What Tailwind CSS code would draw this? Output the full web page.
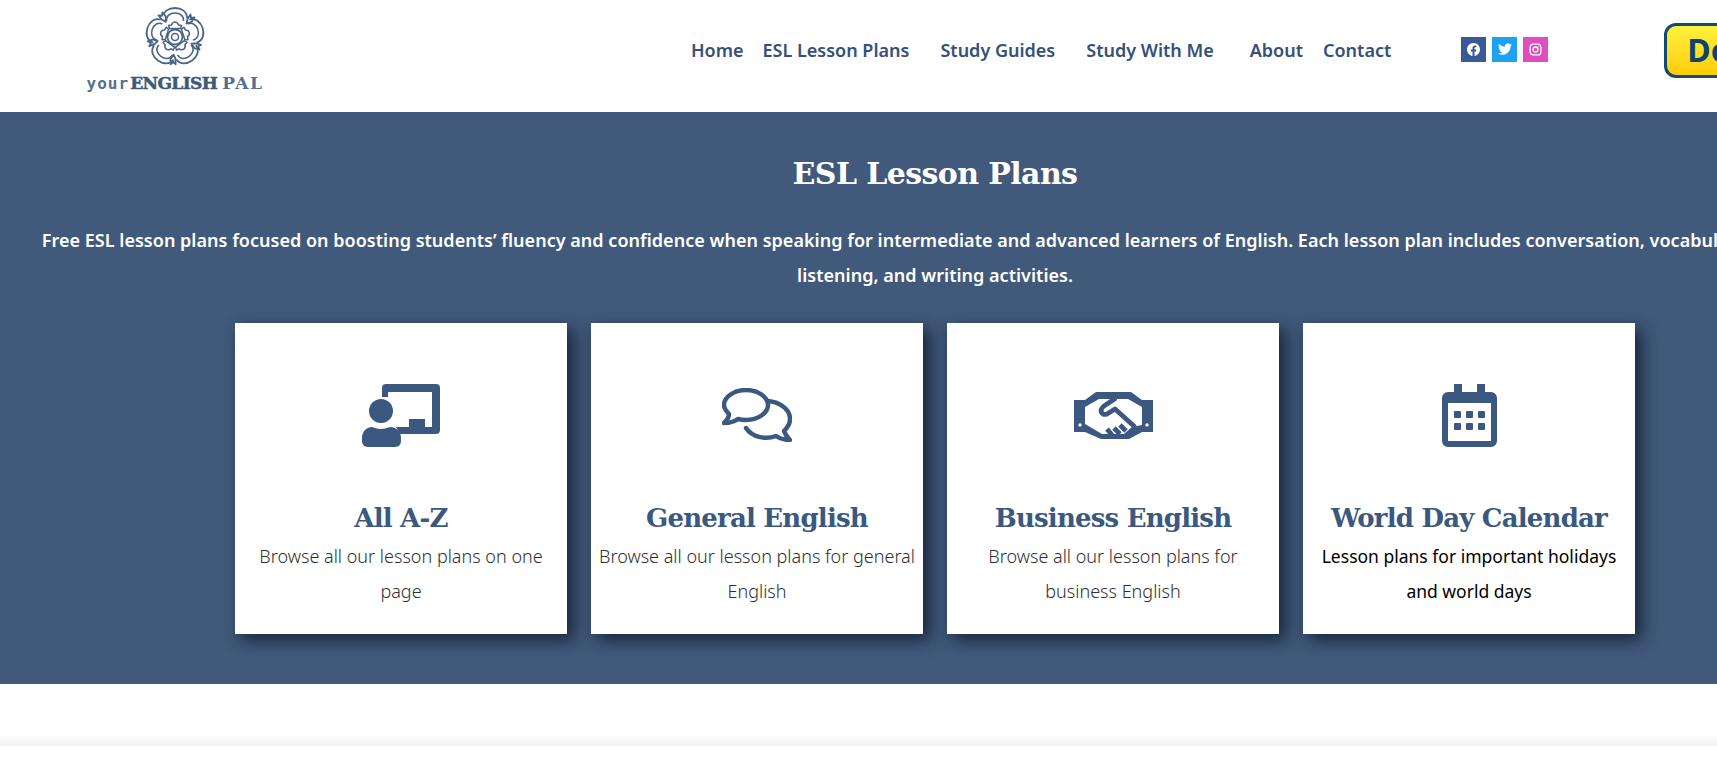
<!DOCTYPE html>
<html lang="en">
<head>
<meta charset="UTF-8" />
<title>ESL Lesson Plans</title>
<script src="https://cdn.jsdelivr.net/npm/@tailwindcss/browser@4"></script>
</head>
<body class="bg-white overflow-hidden h-[758px] font-['Noto_Sans',sans-serif]">
<div class="w-[1870px]">

  <!-- header -->
  <header class="h-[112px] flex items-center bg-white">
    <a class="w-[180px] ml-[85px] self-start flex flex-col items-center pt-[6px] text-[#3d5878]">
      <svg class="w-[62px] h-[62px]" viewBox="0 0 62 62" fill="none" stroke="#4a6585" stroke-width="1.8" stroke-linejoin="round">
        <defs>
          <g id="petal">
            <path d="M19 12C19 5 25 2 31 2s12 3 12 10"/>
            <path d="M22.500 15C22 10 26 7 31 7s9 3 8.500 8" stroke-width="1.500"/>
            <path d="M43.500 13l3-4.500 .5 3.500 3.500-.5-3 4.500-5 1.500z" fill="#fff"/>
            <path d="M31 16c2 0 3 1.500 3.500 3l3 .5-1 3h-11l-1-3 3-.5c.5-1.500 1.500-3 3.500-3z" stroke-width="1.500"/>
          </g>
        </defs>
        <use href="#petal"/>
        <use href="#petal" transform="rotate(72 31 31)"/>
        <use href="#petal" transform="rotate(144 31 31)"/>
        <use href="#petal" transform="rotate(216 31 31)"/>
        <use href="#petal" transform="rotate(288 31 31)"/>
        <circle cx="31" cy="31" r="7.500" fill="#fff"/>
        <circle cx="31" cy="31" r="3.500" stroke-width="1.500"/>
      </svg>
      <div class="flex items-baseline whitespace-nowrap mt-[7px] leading-none">
        <span class="font-['DejaVu_Sans_Mono',monospace] font-bold text-[16px] tracking-[1px] mr-[1px] text-[#55708f]">your</span>
        <span class="font-['DejaVu_Serif',serif] font-bold text-[17px] tracking-[-0.6px] [-webkit-text-stroke:0.5px_#3d5878]">ENGLISH</span>
        <span class="font-['DejaVu_Serif',serif] font-bold text-[17px] ml-[5px] tracking-[1.500px] text-[#55708f]">PAL</span>
      </div>
    </a>

    <nav class="flex items-center ml-[426px] -mt-[11px] text-[18px] font-semibold text-[#35507a] whitespace-nowrap">
      <a>Home</a>
      <a class="ml-[19px]">ESL Lesson Plans</a>
      <a class="ml-[31px]">Study Guides</a>
      <a class="ml-[31px]">Study With Me</a>
      <a class="ml-[36px]">About</a>
      <a class="ml-[20px]">Contact</a>
    </nav>

    <div class="flex items-center gap-[6px] ml-[70px] -mt-[14px]">
      <span class="w-[25px] h-[25px] bg-[#3b5998] flex items-center justify-center">
        <svg class="w-[13px] h-[13px]" viewBox="0 0 24 24" fill="#fff"><path d="M24 12.073c0-6.627-5.373-12-12-12s-12 5.373-12 12c0 5.99 4.388 10.954 10.125 11.854v-8.385H7.078v-3.47h3.047V9.43c0-3.007 1.792-4.669 4.533-4.669 1.312 0 2.686.235 2.686.235v2.953H15.83c-1.491 0-1.956.925-1.956 1.874v2.25h3.328l-.532 3.47h-2.796v8.385C19.612 23.027 24 18.062 24 12.073z"/></svg>
      </span>
      <span class="w-[25px] h-[25px] bg-[#1da1f2] flex items-center justify-center">
        <svg class="w-[14px] h-[14px]" viewBox="0 0 24 24" fill="#fff"><path d="M23.953 4.57a10 10 0 01-2.825.775 4.958 4.958 0 002.163-2.723c-.951.555-2.005.959-3.127 1.184a4.92 4.92 0 00-8.384 4.482C7.69 8.095 4.067 6.13 1.64 3.162a4.822 4.822 0 00-.666 2.475c0 1.71.87 3.213 2.188 4.096a4.904 4.904 0 01-2.228-.616v.06a4.923 4.923 0 003.946 4.827 4.996 4.996 0 01-2.212.085 4.936 4.936 0 004.604 3.417 9.867 9.867 0 01-6.102 2.105c-.39 0-.779-.023-1.17-.067a13.995 13.995 0 007.557 2.209c9.053 0 13.998-7.496 13.998-13.985 0-.21 0-.42-.015-.63A9.935 9.935 0 0024 4.59z"/></svg>
      </span>
      <span class="w-[25px] h-[25px] bg-[#e04dbf] flex items-center justify-center">
        <svg class="w-[13px] h-[13px]" viewBox="0 0 24 24" fill="none" stroke="#fff" stroke-width="2.4"><rect x="2" y="2" width="20" height="20" rx="6"/><circle cx="12" cy="12" r="4.6"/><circle cx="18" cy="6" r="1" fill="#fff" stroke="none"/></svg>
      </span>
    </div>

    <a class="ml-[116px] -mt-[12px] w-[140px] h-[55px] rounded-[12px] border-[3px] border-[#134a74] bg-linear-to-b from-[#fff23c] to-[#ffcc00] text-[#0f4470] text-[32px] font-bold flex items-center pl-[20px]">Donate</a>
  </header>

  <!-- hero band -->
  <section class="bg-[#41597b] h-[572px] flex flex-col items-center">
    <h1 class="mt-[39px] font-['DejaVu_Serif',serif] font-bold text-[30px] leading-[46px] text-white tracking-[-0.6px]">ESL Lesson Plans</h1>
    <p class="mt-[26px] w-[1830px] text-center text-[18px] leading-[35px] font-semibold tracking-[0.02px] text-white">Free ESL lesson plans focused on boosting students’ fluency and confidence when speaking for intermediate and advanced learners of English. Each lesson plan includes conversation, vocabulary, reading, listening, and writing activities.</p>

    <div class="mt-[30px] flex gap-[24px]">
      <article class="w-[332px] h-[311px] bg-white shadow-[6px_6px_16px_rgba(15,25,45,0.85)] flex flex-col items-center">
        <div class="h-[178px] pt-[61px]">
          <svg class="w-[78px] h-[63px]" viewBox="0 0 78 63" fill="#3a5880">
            <path d="M20 4a4 4 0 0 1 4-4h50a4 4 0 0 1 4 4v42a4 4 0 0 1-4 4H38l-4-7h13v-8h16v8h7V8H27c-1 0-1 0-1 1v4h-6z"/>
            <circle cx="19" cy="27" r="12"/>
            <path d="M10 43c3 1 6 2 9 2s6-1 9-2c7 0 11 5 11 11v3c0 3-2 6-6 6H6c-4 0-6-3-6-6v-3c0-6 4-11 10-11z"/>
          </svg>
        </div>
        <h2 class="font-['DejaVu_Serif',serif] font-bold text-[26px] leading-[34px] tracking-[-0.8px] text-[#3a5880]">All A-Z</h2>
        <p class="mt-[4px] px-[5px] text-center text-[18px] leading-[35px] font-light text-[#2f2f2f]">Browse all our lesson plans on one page</p>
      </article>

      <article class="w-[332px] h-[311px] bg-white shadow-[6px_6px_16px_rgba(15,25,45,0.85)] flex flex-col items-center">
        <div class="h-[178px] pt-[65px]">
          <svg class="w-[70px] h-[54px]" viewBox="0 0 70 54" fill="none" stroke="#3a5880" stroke-width="4.500" stroke-linejoin="round" stroke-linecap="round">
            <path d="M46 13c10 1 22 7 22 18 0 5-3 9-6 12 1 3 3 6 6 9-5 0-10-1-14-4-11 4-24 1-30-8"/>
            <path d="M24 2c12 0 22 7 22 15s-10 15-22 15c-3 0-6-.5-8-1-4 3-8 4-14 4 3-3 5-6 5-9-3-3-5-6-5-9C2 9 12 2 24 2z" fill="#fff"/>
          </svg>
        </div>
        <h2 class="font-['DejaVu_Serif',serif] font-bold text-[26px] leading-[34px] tracking-[-0.8px] text-[#3a5880]">General English</h2>
        <p class="mt-[4px] px-[5px] text-center text-[18px] leading-[35px] font-light text-[#2f2f2f]">Browse all our lesson plans for general English</p>
      </article>

      <article class="w-[332px] h-[311px] bg-white shadow-[6px_6px_16px_rgba(15,25,45,0.85)] flex flex-col items-center">
        <div class="h-[178px] pt-[69px]">
          <svg class="w-[79px] h-[47px]" viewBox="0 0 79 47">
            <path d="M0 8h11L22 0h35l11 8h11v32H68l-13 7H27L11 40H0z" fill="#3a5880"/>
            <path d="M11 15L25 7h29l14 8v18l-10 2-8 7H28L11 32z" fill="#fff"/>
            <path d="M42 6L30 14c-5 4-3 10 3 8l8-5 20 18M38 43l-5-6M46 42l-6-6M52 39l-6-6" fill="none" stroke="#3a5880" stroke-width="4.800" stroke-linejoin="round"/>
            <circle cx="6" cy="33" r="1.700" fill="#fff"/><circle cx="73" cy="33" r="1.700" fill="#fff"/>
          </svg>
        </div>
        <h2 class="font-['DejaVu_Serif',serif] font-bold text-[26px] leading-[34px] tracking-[-0.8px] text-[#3a5880]">Business English</h2>
        <p class="mt-[4px] px-[5px] text-center text-[18px] leading-[35px] font-light text-[#2f2f2f]">Browse all our lesson plans for business English</p>
      </article>

      <article class="w-[332px] h-[311px] bg-white shadow-[6px_6px_16px_rgba(15,25,45,0.85)] flex flex-col items-center">
        <div class="h-[178px] pt-[61px]">
          <svg class="w-[55px] h-[63px]" viewBox="0 0 55 63" fill="#3a5880">
            <path d="M12 0h8v8h15V0h8v8h6a6 6 0 0 1 6 6v43a6 6 0 0 1-6 6H6a6 6 0 0 1-6-6V14a6 6 0 0 1 6-6h6zM6 19v38h43V19z" fill-rule="evenodd"/>
            <rect x="12" y="27" width="7" height="7" rx="1"/><rect x="24" y="27" width="7" height="7" rx="1"/><rect x="36" y="27" width="7" height="7" rx="1"/>
            <rect x="12" y="39" width="7" height="7" rx="1"/><rect x="24" y="39" width="7" height="7" rx="1"/><rect x="36" y="39" width="7" height="7" rx="1"/>
          </svg>
        </div>
        <h2 class="font-['DejaVu_Serif',serif] font-bold text-[26px] leading-[34px] tracking-[-0.8px] text-[#3a5880]">World Day Calendar</h2>
        <p class="mt-[4px] px-[5px] text-center text-[17.500px] leading-[35px] text-black">Lesson plans for important holidays and world days</p>
      </article>
    </div>
  </section>

  <div class="h-[62px] bg-linear-to-b from-white from-80% to-[#f1f1f1]"></div>
  <div class="h-[12px] bg-white"></div>
</div>
</body>
</html>
